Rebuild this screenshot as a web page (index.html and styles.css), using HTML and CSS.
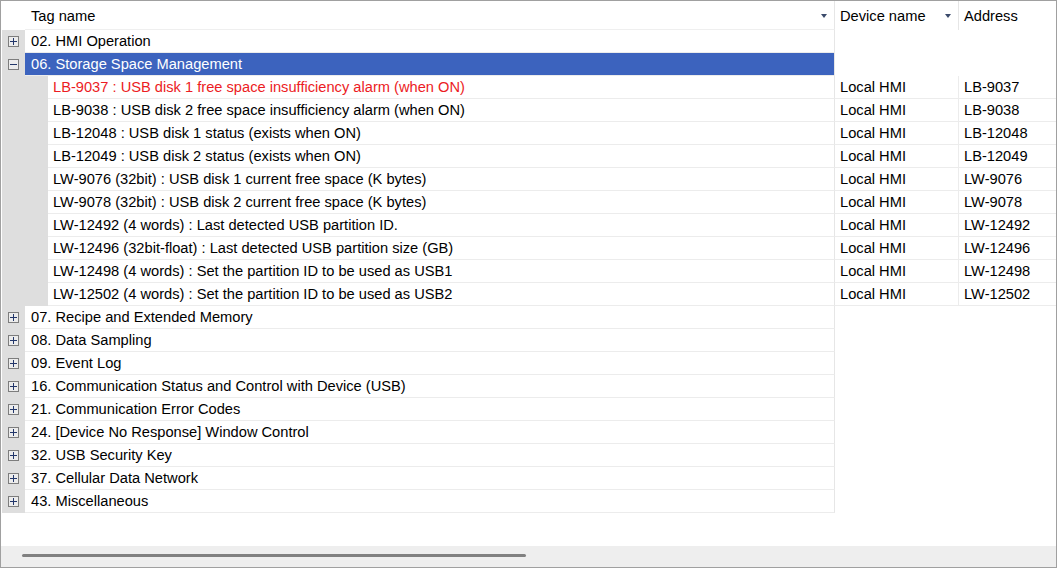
FILE: index.html
```html
<!DOCTYPE html>
<html lang="en">
<head>
    <meta charset="UTF-8">
    <title>System Tags</title>
    <link rel="stylesheet" href="styles.css">
</head>
<body>
    <div class="tag-grid">
        <!-- column headers -->
        <div class="head">
            <div class="head-pad"></div>
            <div class="head-cell head-tag">Tag name <span class="arrow"></span></div>
            <div class="head-cell head-dev">Device name <span class="arrow"></span></div>
            <div class="head-cell head-addr">Address</div>
        </div>

        <div class="rows">
            <div class="row group">
                <div class="gutter"><span class="toggle plus"></span></div>
                <div class="cell tag">02. HMI Operation</div>
            </div>
            <div class="row group selected">
                <div class="gutter"><span class="toggle minus"></span></div>
                <div class="cell tag">06. Storage Space Management</div>
            </div>

            <div class="row child">
                <div class="gutter"></div>
                <div class="cell tag alarm">LB-9037 : USB disk 1 free space insufficiency alarm (when ON)</div>
                <div class="cell dev">Local HMI</div>
                <div class="cell addr">LB-9037</div>
            </div>
            <div class="row child">
                <div class="gutter"></div>
                <div class="cell tag">LB-9038 : USB disk 2 free space insufficiency alarm (when ON)</div>
                <div class="cell dev">Local HMI</div>
                <div class="cell addr">LB-9038</div>
            </div>
            <div class="row child">
                <div class="gutter"></div>
                <div class="cell tag">LB-12048 : USB disk 1 status (exists when ON)</div>
                <div class="cell dev">Local HMI</div>
                <div class="cell addr">LB-12048</div>
            </div>
            <div class="row child">
                <div class="gutter"></div>
                <div class="cell tag">LB-12049 : USB disk 2 status (exists when ON)</div>
                <div class="cell dev">Local HMI</div>
                <div class="cell addr">LB-12049</div>
            </div>
            <div class="row child">
                <div class="gutter"></div>
                <div class="cell tag">LW-9076 (32bit) : USB disk 1 current free space (K bytes)</div>
                <div class="cell dev">Local HMI</div>
                <div class="cell addr">LW-9076</div>
            </div>
            <div class="row child">
                <div class="gutter"></div>
                <div class="cell tag">LW-9078 (32bit) : USB disk 2 current free space (K bytes)</div>
                <div class="cell dev">Local HMI</div>
                <div class="cell addr">LW-9078</div>
            </div>
            <div class="row child">
                <div class="gutter"></div>
                <div class="cell tag">LW-12492 (4 words) : Last detected USB partition ID.</div>
                <div class="cell dev">Local HMI</div>
                <div class="cell addr">LW-12492</div>
            </div>
            <div class="row child">
                <div class="gutter"></div>
                <div class="cell tag">LW-12496 (32bit-float) : Last detected USB partition size (GB)</div>
                <div class="cell dev">Local HMI</div>
                <div class="cell addr">LW-12496</div>
            </div>
            <div class="row child">
                <div class="gutter"></div>
                <div class="cell tag">LW-12498 (4 words) : Set the partition ID to be used as USB1</div>
                <div class="cell dev">Local HMI</div>
                <div class="cell addr">LW-12498</div>
            </div>
            <div class="row child">
                <div class="gutter"></div>
                <div class="cell tag">LW-12502 (4 words) : Set the partition ID to be used as USB2</div>
                <div class="cell dev">Local HMI</div>
                <div class="cell addr">LW-12502</div>
            </div>

            <div class="row group">
                <div class="gutter"><span class="toggle plus"></span></div>
                <div class="cell tag">07. Recipe and Extended Memory</div>
            </div>
            <div class="row group">
                <div class="gutter"><span class="toggle plus"></span></div>
                <div class="cell tag">08. Data Sampling</div>
            </div>
            <div class="row group">
                <div class="gutter"><span class="toggle plus"></span></div>
                <div class="cell tag">09. Event Log</div>
            </div>
            <div class="row group">
                <div class="gutter"><span class="toggle plus"></span></div>
                <div class="cell tag">16. Communication Status and Control with Device (USB)</div>
            </div>
            <div class="row group">
                <div class="gutter"><span class="toggle plus"></span></div>
                <div class="cell tag">21. Communication Error Codes</div>
            </div>
            <div class="row group">
                <div class="gutter"><span class="toggle plus"></span></div>
                <div class="cell tag">24. [Device No Response] Window Control</div>
            </div>
            <div class="row group">
                <div class="gutter"><span class="toggle plus"></span></div>
                <div class="cell tag">32. USB Security Key</div>
            </div>
            <div class="row group">
                <div class="gutter"><span class="toggle plus"></span></div>
                <div class="cell tag">37. Cellular Data Network</div>
            </div>
            <div class="row group">
                <div class="gutter"><span class="toggle plus"></span></div>
                <div class="cell tag">43. Miscellaneous</div>
            </div>
        </div>

        <!-- horizontal scroll bar -->
        <div class="hscroll">
            <div class="thumb"></div>
        </div>
    </div>
</body>
</html>
```

FILE: styles.css
```css
html, body {
    margin: 0;
    padding: 0;
}
body {
    font-family: "Liberation Sans", Arial, sans-serif;
    font-size: 14.67px;
    color: #000;
    background: #fff;
}
.tag-grid {
    box-sizing: border-box;
    width: 1057px;
    height: 568px;
    border: 1px solid #a0a0a0;
    display: flex;
    flex-direction: column;
    overflow: hidden;
}

/* header */
.head {
    display: flex;
    height: 29px;
    flex-shrink: 0;
}
.head-pad {
    width: 24px;
}
.head-cell {
    box-sizing: border-box;
    display: flex;
    align-items: center;
    position: relative;
    padding-left: 6px;
    padding-top: 1px;
}
.head-tag {
    width: 810px;
    border-right: 1px solid #e6e6e6;
    border-bottom: 1px solid #efefef;
}
.head-dev {
    width: 124px;
    padding-left: 5px;
    border-right: 1px solid #e6e6e6;
}
.head-addr {
    flex: 1;
    padding-left: 5px;
}
.arrow {
    position: absolute;
    right: 7px;
    top: 13px;
    width: 0;
    height: 0;
    border-left: 3.5px solid transparent;
    border-right: 3.5px solid transparent;
    border-top: 4px solid #3b4a6b;
}

/* rows */
.row {
    display: flex;
    height: 23px;
}
.gutter {
    margin-left: 1px;
    width: 23px;
    background: #dedede;
    display: flex;
    align-items: center;
    justify-content: center;
    flex-shrink: 0;
    padding-right: 1px;
    box-sizing: border-box;
}
.child .gutter {
    width: 46px;
}
.cell {
    box-sizing: border-box;
    height: 23px;
    line-height: 22px;
    border-bottom: 1px solid #ececec;
    white-space: nowrap;
    overflow: hidden;
}
.cell.tag {
    width: 810px;
    padding-left: 6px;
    border-right: 1px solid #e6e6e6;
}
.child .cell.tag {
    width: 787px;
    padding-left: 5px;
}
.cell.dev {
    width: 124px;
    padding-left: 5px;
    border-right: 1px solid #ececec;
}
.cell.addr {
    flex: 1;
    padding-left: 5px;
}
.selected .cell.tag {
    background: #3c63be;
    color: #fff;
}
.cell.alarm {
    color: #ec1c24;
}

/* expand / collapse box */
.toggle {
    box-sizing: border-box;
    width: 11px;
    height: 11px;
    border: 1px solid #7d7d7d;
    background: #ececec;
    position: relative;
}
.toggle::before {
    content: "";
    position: absolute;
    left: 1px;
    top: 4px;
    width: 7px;
    height: 1px;
    background: #22366a;
}
.toggle.plus::after {
    content: "";
    position: absolute;
    left: 4px;
    top: 1px;
    width: 1px;
    height: 7px;
    background: #22366a;
}

/* scroll bar */
.hscroll {
    margin-top: auto;
    height: 21px;
    background: #eeeeee;
    flex-shrink: 0;
    padding-top: 8px;
    box-sizing: border-box;
}
.thumb {
    margin-left: 21px;
    width: 504px;
    height: 3px;
    border-radius: 1.5px;
    background: #808080;
}
```
